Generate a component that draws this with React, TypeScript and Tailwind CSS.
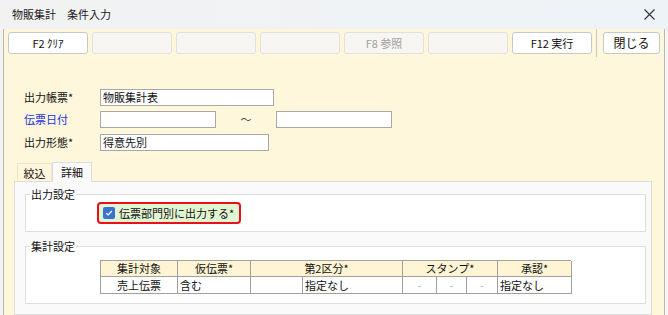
import React from "react";

const font = { fontFamily: '"Noto Sans CJK JP", "Noto Sans", sans-serif' };

function ToolButton({ label, enabled }: { label?: string; enabled?: boolean }) {
  return (
    <div
      className={
        "w-[80px] h-[22px] shrink-0 rounded-[3px] border flex items-center justify-center text-[11px] leading-none " +
        (enabled
          ? "bg-white border-[#c8c8c8] text-[#111]"
          : "bg-[#f7f6f2] border-[#e2e0da] text-[#a0a0a0]")
      }
    >
      {label}
    </div>
  );
}

function Input({ w, value }: { w: string; value?: string }) {
  return (
    <div
      className={
        w +
        " h-[17px] bg-white border border-[#a8a8a8] flex items-center pl-[2px] text-[11px] leading-none text-[#111]"
      }
    >
      {value}
    </div>
  );
}

const th = "h-[16px] bg-[#fff5d5] border-r border-b border-[#a0a0a0] flex items-center justify-center";
const td = "h-[17px] bg-white border-r border-b border-[#a0a0a0] flex items-center";

export default function App() {
  return (
    <div className="w-[668px] h-[315px] overflow-hidden bg-[#f4f4f4] flex flex-col text-[#111]" style={font}>
      {/* Title bar */}
      <div className="h-[29px] shrink-0 flex items-center justify-between pl-[12px] pr-[12px] bg-gradient-to-r from-[#f2f2f2] to-[#eef3f7]">
        <div className="text-[11px] text-[#222]">物販集計　条件入力</div>
        <svg width="11" height="11" viewBox="0 0 11 11" className="mr-[1px]">
          <path d="M0.5 0.5 L10.5 10.5 M10.5 0.5 L0.5 10.5" stroke="#333" strokeWidth="1.1" />
        </svg>
      </div>

      {/* Body */}
      <div className="flex-1 mx-[3px] border-x border-[#b8b8b8] bg-[#fff7dc] flex flex-col">
        {/* Toolbar */}
        <div className="h-[28px] shrink-0 flex items-stretch pl-[4px]">
          <div className="flex items-center gap-[4px]">
            <ToolButton label="F2 ｸﾘｱ" enabled />
            <ToolButton />
            <ToolButton />
            <ToolButton />
            <ToolButton label="F8 参照" />
            <ToolButton />
            <ToolButton label="F12 実行" enabled />
          </div>
          <div className="w-px bg-[#c8c8c8] ml-[4px]" />
          <div className="flex items-center ml-[6px]">
            <div className="w-[57px] h-[22px] rounded-[3px] border border-[#c8c8c8] bg-white flex items-center justify-center text-[12px] leading-none">
              閉じる
            </div>
          </div>
        </div>

        {/* Form */}
        <div className="pt-[32px] pl-[20px] flex flex-col gap-[5px]">
          <div className="flex items-center h-[17px]">
            <div className="w-[76px] text-[11px] leading-none">出力帳票*</div>
            <Input w="w-[174px]" value="物販集計表" />
          </div>
          <div className="flex items-center h-[17px]">
            <div className="w-[76px] text-[11px] leading-none text-[#1a33e0]">伝票日付</div>
            <Input w="w-[116px]" />
            <div className="w-[60px] text-center text-[11px] leading-none text-[#444]">〜</div>
            <Input w="w-[116px]" />
          </div>
          <div className="flex items-center h-[17px] mt-[1px]">
            <div className="w-[76px] text-[11px] leading-none">出力形態*</div>
            <Input w="w-[169px]" value="得意先別" />
          </div>
        </div>

        {/* Tabs */}
        <div className="mt-[11px] ml-[10px] mr-[12px] flex flex-col flex-1">
          <div className="flex pl-[3px] h-[20px] -mb-px relative z-10">
            <div className="w-[35px] h-[19px] mt-[1px] border border-b-0 border-[#ece3c8] flex items-center justify-center text-[11px] leading-none">
              絞込
            </div>
            <div className="w-[40px] h-[20px] border border-b-0 border-[#dcdcdc] bg-[#fafafa] flex items-center justify-center text-[11px] leading-none">
              詳細
            </div>
          </div>
          <div className="flex-1 border border-[#dcdcdc] bg-[#fafafa] pt-[4px] pl-[10px] pr-[5px]">
            <fieldset className="border border-[#dedede] bg-white pb-[7px]">
              <legend className="ml-[4px] px-[1px] text-[11px] leading-[16px]">出力設定</legend>
              <div className="pl-[71px]">
                <div className="w-[144px] h-[22px] border-2 border-[#e8101a] rounded-[4px] bg-[#e2f5d2] flex items-center pl-[4px] gap-[4px]">
                  <div className="w-[12px] h-[12px] rounded-[2px] bg-[#3a72d0] flex items-center justify-center">
                    <svg width="8" height="8" viewBox="0 0 8 8">
                      <path d="M1.2 4.2 L3.2 6 L6.8 2" stroke="white" strokeWidth="1.2" fill="none" />
                    </svg>
                  </div>
                  <span className="text-[11px] leading-none">伝票部門別に出力する*</span>
                </div>
              </div>
            </fieldset>

            <fieldset className="mt-[6px] border border-[#dedede] bg-white pt-[6px] pb-[9px]">
              <legend className="ml-[4px] px-[1px] text-[11px] leading-[16px]">集計設定</legend>
              <div className="pl-[74px]">
                <div className="grid grid-cols-[77px_73px_52px_100px_34px_30px_31px_74px] w-[471px] border-t border-l border-[#a0a0a0] text-[11px] leading-none">
                  <div className={th}>集計対象</div>
                  <div className={th}>仮伝票*</div>
                  <div className={th + " col-span-2"}>第2区分*</div>
                  <div className={th + " col-span-3"}>スタンプ*</div>
                  <div className={th}>承認*</div>

                  <div className={td + " justify-center"}>売上伝票</div>
                  <div className={td + " pl-[2px]"}>含む</div>
                  <div className={td} />
                  <div className={td + " pl-[2px]"}>指定なし</div>
                  <div className={td + " justify-center text-[#b0b0b0]"}>-</div>
                  <div className={td + " justify-center text-[#b0b0b0]"}>-</div>
                  <div className={td + " justify-center text-[#b0b0b0]"}>-</div>
                  <div className={td + " pl-[2px]"}>指定なし</div>
                </div>
              </div>
            </fieldset>
          </div>
        </div>
      </div>
    </div>
  );
}
